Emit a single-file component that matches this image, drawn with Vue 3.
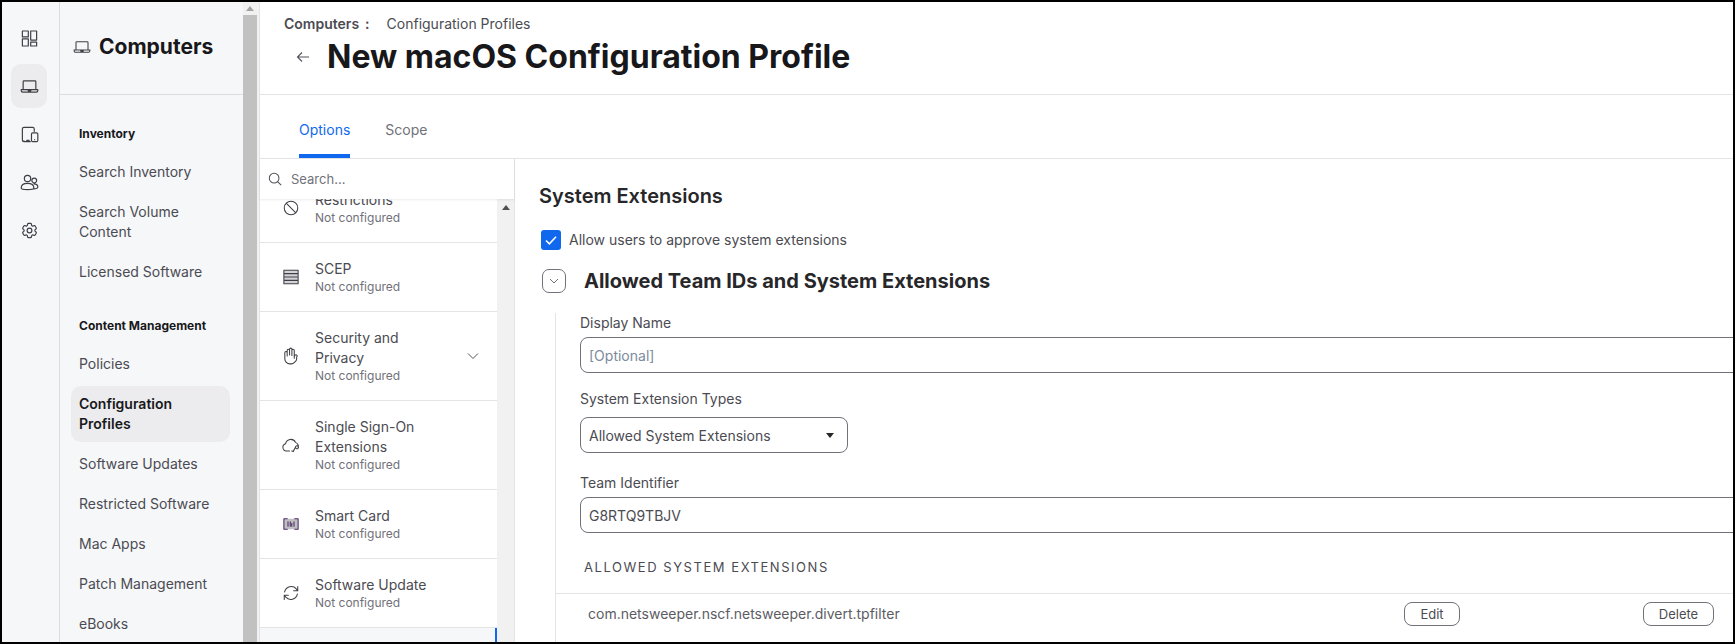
<template>
  <div class="page">
    <!-- icon rail -->
    <nav class="rail">
      <div
        v-for="item in railItems"
        :key="item"
        class="rail-btn"
        :class="{ active: item === 'laptop' }"
      >
        <svg class="rail-icon" viewBox="0 0 24 24"><path :d="icons[item]" /></svg>
      </div>
    </nav>

    <!-- section nav -->
    <aside class="panel">
      <div class="panel-head">
        <svg class="panel-icon" viewBox="0 0 24 24"><path :d="icons.laptop" /></svg>
        <span>Computers</span>
      </div>
      <div class="panel-nav">
        <div v-for="group in navGroups" :key="group.title" class="nav-group">
          <div class="nav-title">{{ group.title }}</div>
          <a
            v-for="link in group.links"
            :key="link"
            class="nav-link"
            :class="{ active: link === 'Configuration Profiles' }"
          >{{ link }}</a>
        </div>
      </div>
    </aside>
    <div class="page-scroll">
      <div class="scroll-arrow up"></div>
      <div class="page-thumb"></div>
    </div>

    <main class="main">
      <header class="head">
        <div class="crumbs">
          <span class="crumb-root">Computers<span class="crumb-sep">:</span></span>
          <span>Configuration Profiles</span>
        </div>
        <div class="title-row">
          <svg class="back" viewBox="0 0 16 16"><path d="M14 8H2.5M7 3.5 2.5 8 7 12.5" /></svg>
          <h1>New macOS Configuration Profile</h1>
        </div>
      </header>

      <div class="tabs">
        <span class="tab active">Options</span>
        <span class="tab">Scope</span>
      </div>

      <div class="body">
        <section class="options">
          <div class="search">
            <svg class="search-icon" viewBox="0 0 16 16"><circle cx="7" cy="7" r="5.5" /><path d="m11 11 4 4" /></svg>
            <span>Search...</span>
          </div>
          <div class="options-scroll">
            <ul class="payloads">
              <li
                v-for="p in payloads"
                :key="p.name"
                class="payload"
                :class="{ clipped: p.clipped }"
              >
                <svg class="payload-icon" viewBox="0 0 24 24">
                  <rect v-if="p.icon === 'card'" x="2.500" y="5" width="19" height="14" class="card-fill" />
                  <rect v-if="p.icon === 'lines'" x="2.500" y="3" width="19" height="18" class="card-fill light" />
                  <path :d="icons[p.icon]" :class="{ purple: p.icon === 'card' }" />
                </svg>
                <div class="payload-text">
                  <div class="payload-name">{{ p.name }}</div>
                  <div class="payload-state">Not configured</div>
                </div>
                <svg v-if="p.expand" class="payload-chev" viewBox="0 0 12 8"><path d="M1 1.500 6 6.500l5-5" /></svg>
              </li>
              <li class="payload-next"></li>
            </ul>
            <div class="list-scroll">
              <div class="scroll-arrow up dark"></div>
            </div>
          </div>
        </section>

        <section class="detail">
          <h2>System Extensions</h2>
          <label class="check-row">
            <span class="check">
              <svg viewBox="0 0 20 20"><path d="m5 10.500 3.400 3.400L15 6.800" /></svg>
            </span>
            Allow users to approve system extensions
          </label>
          <div class="group-head">
            <button class="toggle">
              <svg viewBox="0 0 12 8"><path d="M2 2l4 4 4-4" /></svg>
            </button>
            <h3>Allowed Team IDs and System Extensions</h3>
          </div>
          <div class="group-body">
            <div class="field-label">Display Name</div>
            <div class="input placeholder">[Optional]</div>
            <div class="field-label">System Extension Types</div>
            <div class="select">
              <span>Allowed System Extensions</span>
              <i class="caret"></i>
            </div>
            <div class="field-label">Team Identifier</div>
            <div class="input">G8RTQ9TBJV</div>
            <div class="list-title">ALLOWED SYSTEM EXTENSIONS</div>
            <div class="ext-row">
              <span class="ext-name">com.netsweeper.nscf.netsweeper.divert.tpfilter</span>
              <button class="btn edit">Edit</button>
              <button class="btn delete">Delete</button>
            </div>
          </div>
        </section>
      </div>
    </main>
  </div>
</template>

<script setup>
const railItems = ['dashboard', 'laptop', 'devices', 'users', 'gear']

const icons = {
  dashboard: 'M3 2.500h7.500V10H3zM3 12.500h7.500v9H3zM13.500 2.500H21V14h-7.500zM13.500 16.500H21v5h-7.500z',
  laptop: 'M5 5h14a1 1 0 0 1 1 1v10H4V6a1 1 0 0 1 1-1zM1.500 16h21v1a2 2 0 0 1-2 2h-17a2 2 0 0 1-2-2zM10 16.500l.6 1h2.800l.6-1',
  devices: 'M18 8V5a2 2 0 0 0-2-2H5a2 2 0 0 0-2 2v14a2 2 0 0 0 2 2h8M5 21v-1M8.500 19.500h3M16 10h5a1.500 1.500 0 0 1 1.500 1.500v8A1.500 1.500 0 0 1 21 21h-5a1.500 1.500 0 0 1-1.500-1.500v-8A1.500 1.500 0 0 1 16 10zM18.500 18.500h0',
  users: 'M9.500 3a4 4 0 1 1 0 8 4 4 0 0 1 0-8zM18 6.500a3 3 0 1 1 0 6 3 3 0 0 1 0-6zM1.500 19c0-4 3.500-6 8-6s8 2 8 6c0 1.300-3.500 2-8 2s-8-.7-8-2zM17.500 13.700c3 0 5 1.600 5 4 0 1.500-2 2.300-5.300 2.300',
  gear: 'M9.594 3.94c.09-.542.56-.94 1.11-.94h2.593c.55 0 1.02.398 1.11.94l.213 1.281c.063.374.313.686.645.87.074.04.147.083.22.127.325.196.72.257 1.075.124l1.217-.456a1.125 1.125 0 0 1 1.37.49l1.296 2.247a1.125 1.125 0 0 1-.26 1.431l-1.003.827c-.293.241-.438.613-.43.992a7.723 7.723 0 0 1 0 .255c-.008.378.137.75.43.991l1.004.827c.424.35.534.955.26 1.43l-1.298 2.247a1.125 1.125 0 0 1-1.369.491l-1.217-.456c-.355-.133-.75-.072-1.076.124a6.47 6.47 0 0 1-.22.128c-.331.183-.581.495-.644.869l-.213 1.281c-.09.543-.56.94-1.11.94h-2.594c-.55 0-1.019-.398-1.11-.94l-.213-1.281c-.062-.374-.312-.686-.644-.87a6.52 6.52 0 0 1-.22-.127c-.325-.196-.72-.257-1.076-.124l-1.217.456a1.125 1.125 0 0 1-1.369-.49l-1.297-2.247a1.125 1.125 0 0 1 .26-1.431l1.004-.827c.292-.24.437-.613.43-.991a6.932 6.932 0 0 1 0-.255c.007-.38-.138-.751-.43-.992l-1.004-.827a1.125 1.125 0 0 1-.26-1.43l1.297-2.247a1.125 1.125 0 0 1 1.37-.491l1.216.456c.356.133.751.072 1.076-.124.072-.044.146-.086.22-.128.332-.183.582-.495.644-.869l.214-1.28ZM15 12a3 3 0 1 1-6 0 3 3 0 0 1 6 0Z',
  ban: 'M12 3a9 9 0 1 1 0 18 9 9 0 0 1 0-18zM5.600 5.600l12.800 12.800',
  lines: 'M2.500 3h19v18h-19zM2.500 7.500h19M2.500 12h19M2.500 16.500h19',
  hand: 'M10.050 4.575a1.575 1.575 0 1 0-3.150 0v3m3.150-3v-1.500a1.575 1.575 0 0 1 3.150 0v1.500m-3.150 0 .075 5.925m3.075.75V4.575m0 0a1.575 1.575 0 0 1 3.150 0V15M6.900 7.575a1.575 1.575 0 1 0-3.150 0v8.175a6.750 6.750 0 0 0 6.750 6.750h2.018a5.250 5.250 0 0 0 3.712-1.538l1.732-1.732a5.250 5.250 0 0 0 1.538-3.712l.003-2.024a.668.668 0 0 1 .198-.471 1.575 1.575 0 1 0-2.228-2.228 3.818 3.818 0 0 0-1.120 2.687M6.900 7.575V12',
  cloud: 'M10 20H6a5 5 0 0 1-1.200-9.800A7 7 0 0 1 18 8.500a5.500 5.500 0 0 1 3.500 7M18 15l-3 5.500M18 15a2 2 0 1 1 0 .1M13 20l2 .8 1-2',
  card: 'M7 5H2.500v14H7M17 5h4.500v14H17M8 9v6M11 9v6M13 11v4M16 9v6',
  sync: 'M3.500 10.500A9 9 0 0 1 19 6.500l2 2.500M21 3.500V9h-5.500M20.500 13.500A9 9 0 0 1 5 17.500L3 15M3 20.500V15h5.500',
}

const navGroups = [
  { title: 'Inventory', links: ['Search Inventory', 'Search Volume Content', 'Licensed Software'] },
  {
    title: 'Content Management',
    links: ['Policies', 'Configuration Profiles', 'Software Updates', 'Restricted Software', 'Mac Apps', 'Patch Management', 'eBooks'],
  },
]

const payloads = [
  { name: 'Restrictions', icon: 'ban', clipped: true },
  { name: 'SCEP', icon: 'lines' },
  { name: 'Security and Privacy', icon: 'hand', expand: true },
  { name: 'Single Sign-On Extensions', icon: 'cloud' },
  { name: 'Smart Card', icon: 'card' },
  { name: 'Software Update', icon: 'sync' },
]
</script>

<style>
html,
body {
  margin: 0;
  background: #fff;
}
</style>

<style scoped>
* {
  box-sizing: border-box;
}

.page {
  display: flex;
  width: 1735px;
  height: 644px;
  border: 2px solid #000;
  overflow: hidden;
  font-family: Inter, "Liberation Sans", sans-serif;
  font-size: 14px;
  line-height: 20px;
  color: #4b4b52;
  background: #fff;
}

/* rail */
.rail {
  flex: 0 0 58px;
  padding-top: 14px;
  background: #f6f7f9;
  border-right: 1px solid #dcdde0;
}

.rail-btn {
  display: flex;
  align-items: center;
  justify-content: center;
  width: 36px;
  height: 44px;
  margin: 0 0 4px 9px;
  border-radius: 10px;
}

.rail-btn.active {
  background: #ececee;
}

.rail-icon {
  width: 19px;
  height: 19px;
  fill: none;
  stroke: #3f3f46;
  stroke-width: 1.5;
  stroke-linejoin: round;
  stroke-linecap: round;
}

/* panel */
.panel {
  flex: 0 0 183px;
  background: #f6f7f9;
}

.panel-head {
  display: flex;
  align-items: center;
  gap: 8px;
  height: 93px;
  padding: 0 0 2px 13px;
  border-bottom: 1px solid #dcdde0;
  font-size: 21px;
  font-weight: 700;
  color: #18181b;
}

.panel-icon {
  width: 18px;
  height: 18px;
  fill: none;
  stroke: #3f3f46;
  stroke-width: 1.4;
}

.panel-nav {
  padding: 29px 13px 0 11px;
}

.nav-group {
  display: flex;
  flex-direction: column;
}

.nav-group + .nav-group {
  margin-top: 24px;
}

.nav-title {
  margin: 0 0 8px 8px;
  font-size: 12px;
  font-weight: 700;
  color: #18181b;
}

.nav-link {
  display: block;
  margin: 2px 0;
  padding: 8px 8px;
  border-radius: 10px;
}

.nav-link.active {
  background: #ececee;
  font-weight: 600;
  color: #18181b;
}

/* page scrollbar */
.page-scroll {
  flex: 0 0 17px;
  background: #f1f1f1;
  border-right: 1px solid #e4e4e7;
  position: relative;
}

.page-thumb {
  position: absolute;
  top: 13px;
  bottom: 0;
  left: 0;
  width: 14px;
  background: #c1c1c1;
}

.scroll-arrow.up {
  width: 0;
  height: 0;
  margin: 4px auto 0;
  border: 4px solid transparent;
  border-top: 0;
  border-bottom: 5px solid #a3a3a3;
}

.page-scroll .scroll-arrow.up {
  margin-left: 3px;
}

.scroll-arrow.up.dark {
  border-bottom-color: #505050;
}

/* main */
.main {
  flex: 1;
  min-width: 0;
  display: flex;
  flex-direction: column;
}

.head {
  height: 93px;
  padding: 12px 0 0 24px;
  border-bottom: 1px solid #e4e4e7;
  flex: none;
}

.crumbs {
  display: flex;
  gap: 17px;
}

.crumb-root {
  font-weight: 600;
}

.crumb-sep {
  margin-left: 6px;
}

.title-row {
  display: flex;
  align-items: center;
  gap: 16px;
  margin-top: 3px;
  padding-left: 11px;
}

.back {
  width: 16px;
  height: 16px;
  fill: none;
  stroke: #52525b;
  stroke-width: 1.1;
}

h1 {
  margin: 0;
  font-size: 32px;
  line-height: 40px;
  font-weight: 700;
  color: #18181b;
}

.tabs {
  flex: none;
  display: flex;
  gap: 35px;
  height: 64px;
  padding: 25px 0 0 39px;
  border-bottom: 1px solid #e4e4e7;
}

.tab {
  height: 38px;
  color: #71717a;
}

.tab.active {
  color: #1068ee;
  border-bottom: 4px solid #1068ee;
  padding-bottom: 14px;
  height: 38px;
}

.body {
  flex: 1;
  min-height: 0;
  display: flex;
}

/* left options list */
.options {
  flex: 0 0 255px;
  display: flex;
  flex-direction: column;
  border-right: 1px solid #e4e4e7;
  min-height: 0;
}

.search {
  position: relative;
  z-index: 1;
  flex: none;
  display: flex;
  align-items: center;
  gap: 9px;
  height: 40px;
  padding-left: 8px;
  background: #fff;
  font-size: 13px;
  color: #71717a;
  box-shadow: 0 1px 2px rgba(0, 0, 0, 0.08);
}

.search-icon {
  width: 14px;
  height: 14px;
  fill: none;
  stroke: #52525b;
  stroke-width: 1.2;
}

.options-scroll {
  flex: 1;
  min-height: 0;
  display: flex;
}

.payloads {
  flex: 0 0 237px;
  margin: 0;
  padding: 0;
  list-style: none;
  overflow: hidden;
}

.payload {
  display: flex;
  align-items: center;
  padding: 16px 0 16px 24px;
  border-bottom: 1px solid #e4e4e7;
}

.payload.clipped {
  height: 44px;
  overflow: hidden;
  align-items: flex-end;
}

.payload.clipped .payload-icon {
  margin-bottom: 9px;
}

.payload-icon {
  flex: none;
  width: 18px;
  height: 18px;
  margin-right: 15px;
  margin-left: -2px;
  fill: none;
  stroke: #3f3f46;
  stroke-width: 1.4;
  stroke-linejoin: round;
  stroke-linecap: round;
}

.payload-icon .card-fill {
  fill: #c0c0c0;
  stroke: none;
}

.payload-icon .card-fill.light {
  fill: #d4d4d8;
}

.payload-icon .purple {
  stroke: #4b2a6b;
}

.payload-text {
  width: 128px;
  flex: none;
}

.payload-state {
  font-size: 12px;
  line-height: 16px;
  color: #71717a;
}

.payload-chev {
  width: 12px;
  height: 8px;
  margin-left: 24px;
  fill: none;
  stroke: #52525b;
  stroke-width: 1;
}

.payload-next {
  height: 20px;
  background: #f6f7f9;
  border-right: 2px solid #1068ee;
}

.list-scroll {
  flex: 1;
  background: #f1f1f1;
  padding-top: 2px;
}

/* right detail */
.detail {
  flex: 1;
  min-width: 0;
  padding: 25px 0 0 24px;
  overflow: hidden;
}

h2 {
  margin: 0;
  font-size: 20px;
  line-height: 24px;
  font-weight: 600;
  color: #27272a;
}

.check-row {
  display: flex;
  align-items: center;
  gap: 8px;
  margin: 22px 0 0 2px;
}

.check {
  width: 20px;
  height: 20px;
  border-radius: 3px;
  background: #1068ee;
}

.check svg {
  display: block;
  fill: none;
  stroke: #fff;
  stroke-width: 1.6;
}

.group-head {
  display: flex;
  align-items: center;
  gap: 18px;
  margin: 19px 0 0 3px;
}

.toggle {
  display: flex;
  align-items: center;
  justify-content: center;
  width: 24px;
  height: 24px;
  padding: 0;
  background: #fff;
  border: 1px solid #71717a;
  border-radius: 7px;
}

.toggle svg {
  width: 12px;
  height: 8px;
  fill: none;
  stroke: #71717a;
  stroke-width: 1;
}

h3 {
  margin: 0;
  font-size: 20px;
  line-height: 24px;
  font-weight: 700;
  color: #27272a;
}

.group-body {
  margin: 20px 0 0 16px;
  padding-left: 24px;
  border-left: 1px solid #e4e4e7;
  height: 400px;
}

.field-label {
  margin-bottom: 4px;
}

.input,
.select {
  display: flex;
  align-items: center;
  height: 36px;
  padding: 1px 8px 0;
  border: 1px solid #71717a;
  border-radius: 8px;
}

.input {
  margin-right: -24px;
  margin-bottom: 16px;
}

.placeholder {
  color: #7c8a9c;
}

.select {
  justify-content: space-between;
  width: 268px;
  margin: 8px 0 20px;
  padding-right: 13px;
}

.caret {
  border: 4px solid transparent;
  border-top: 5px solid #27272a;
  border-bottom: 0;
}

.list-title {
  margin: 24px 0 16px 4px;
  font-size: 13px;
  letter-spacing: 1.55px;
}

.ext-row {
  display: flex;
  align-items: center;
  gap: 183px;
  margin-left: -24px;
  padding: 8px 19px 0 32px;
  border-top: 1px solid #e4e4e7;
}

.ext-name {
  flex: 1;
  color: #5c5c64;
}

.btn {
  height: 24px;
  padding: 0;
  background: #fff;
  border: 1px solid #71717a;
  border-radius: 8px;
  font: inherit;
  font-size: 13px;
  color: #4b4b52;
}

.btn.edit {
  width: 56px;
}

.btn.delete {
  width: 71px;
}
</style>
